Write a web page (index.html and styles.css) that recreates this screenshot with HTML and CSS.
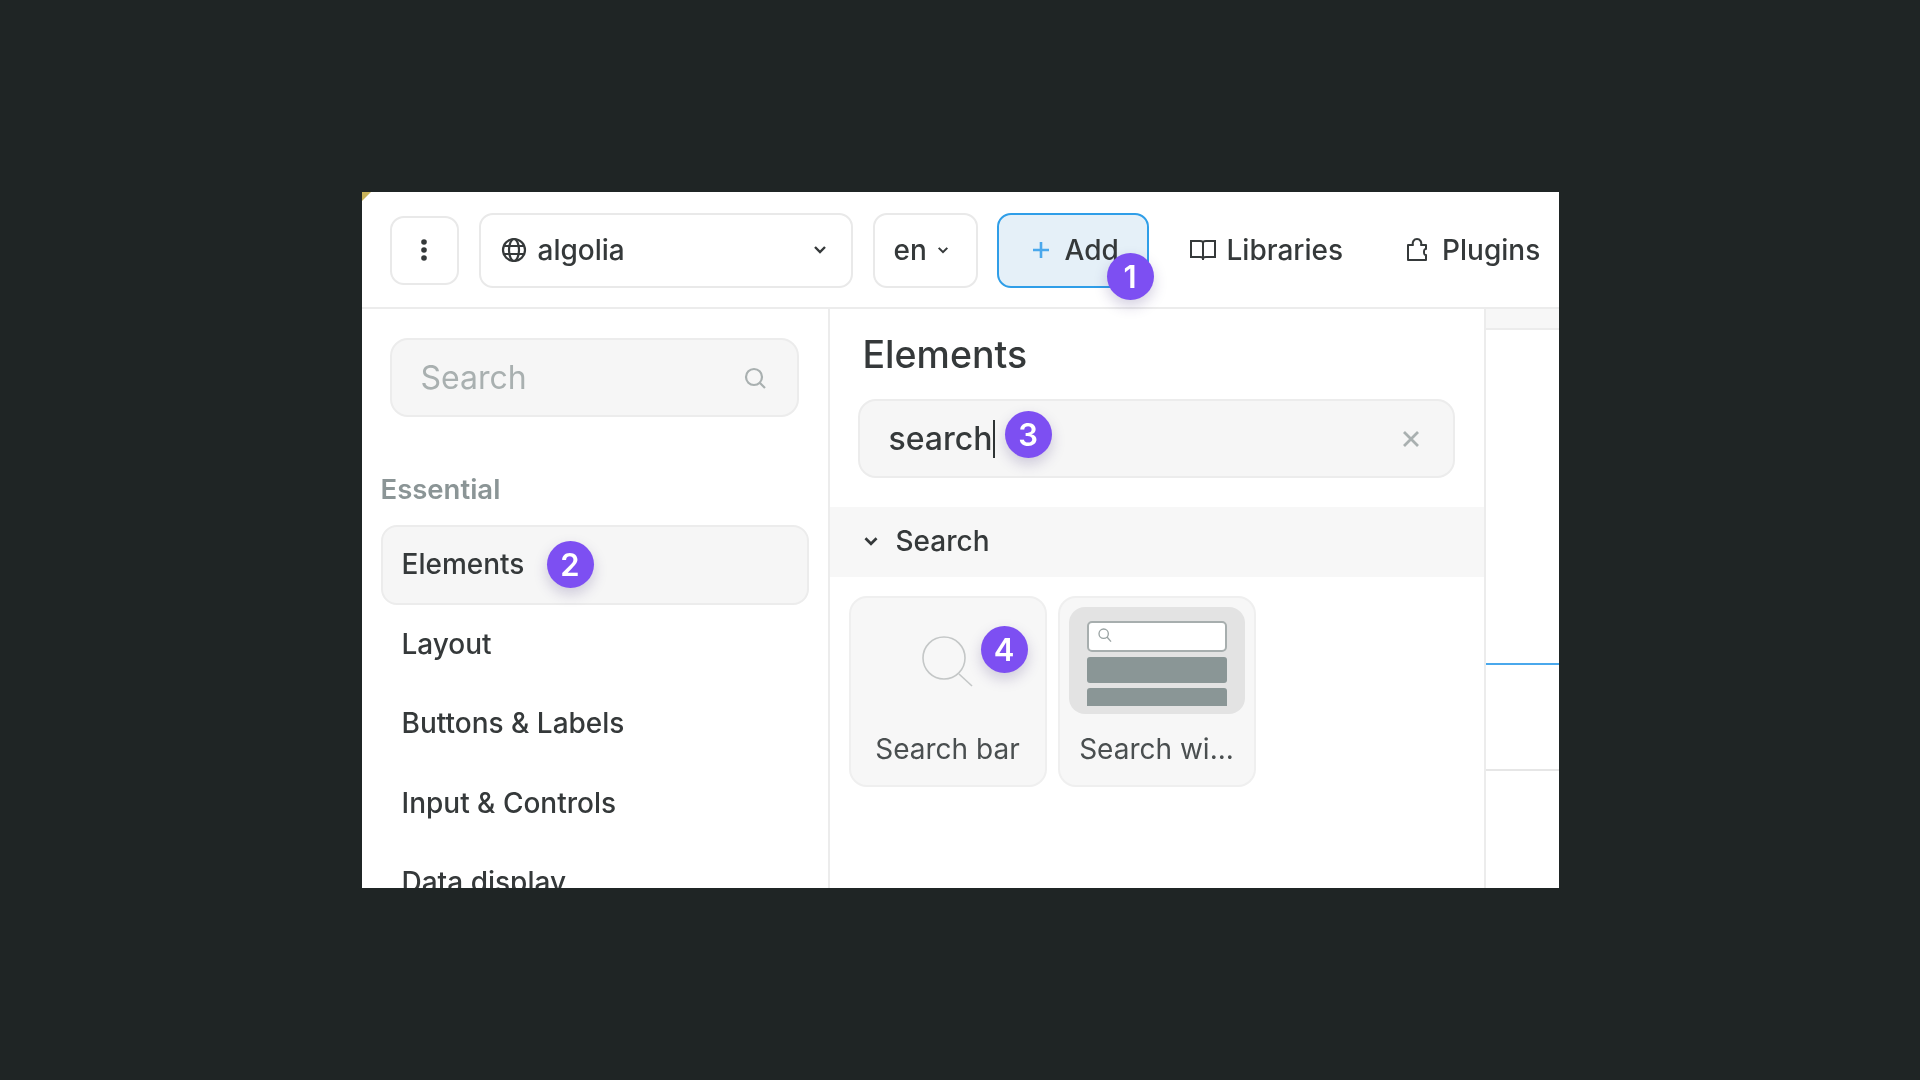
FILE: index.html
```html
<!DOCTYPE html>
<html lang="en">
<head>
<meta charset="UTF-8">
<meta name="viewport" content="width=device-width, initial-scale=1.0">
<title>Add search element</title>
<link rel="stylesheet" href="styles.css">
</head>
<body>
  <div class="window">
    <!-- Top bar -->
    <header class="topbar">
      <button class="btn btn-menu" aria-label="Menu">
        <svg width="8" height="24" viewBox="0 0 8 24"><circle cx="4" cy="4" r="2.8"/><circle cx="4" cy="12" r="2.8"/><circle cx="4" cy="20" r="2.8"/></svg>
      </button>
      <button class="btn btn-site">
        <svg class="globe" width="26" height="26" viewBox="0 0 26 26"><circle cx="13" cy="13" r="11"/><ellipse cx="13" cy="13" rx="5" ry="11"/><path d="M3 9h20M3 17h20"/></svg>
        <span>algolia</span>
        <svg class="chev chev-site" width="14" height="9" viewBox="0 0 14 9"><path d="M2 2l5 5 5-5"/></svg>
      </button>
      <button class="btn btn-lang">
        <span>en</span>
        <svg class="chev" width="12" height="8" viewBox="0 0 14 9"><path d="M2 2l5 5 5-5"/></svg>
      </button>
      <div class="add-wrap">
        <button class="btn btn-add">
          <svg class="plus" width="20" height="20" viewBox="0 0 20 20"><path d="M10 2v16M2 10h16"/></svg>
          <span>Add</span>
        </button>
        <span class="badge badge-add">1</span>
      </div>
      <a class="tab tab-lib">
        <svg width="28" height="24" viewBox="0 0 28 24"><path d="M14 4c-1-1-2-1-3-1H2v16h9c1 0 2 0 3 1 1-1 2-1 3-1h9V3h-9c-1 0-2 0-3 1zM14 4v18"/></svg>
        <span>Libraries</span>
      </a>
      <a class="tab tab-plug">
        <svg width="24" height="26" viewBox="0 0 24 26"><path d="M3 8h5c-1-3 1-6 4-6s5 3 4 6h5v4c-2 0-2 1-2 3s0 3 2 3v5H3z" stroke-linejoin="round"/></svg>
        <span>Plugins</span>
      </a>
    </header>

    <div class="main">
      <!-- Left navigation -->
      <nav class="sidebar">
        <div class="field side-search">
          <span class="placeholder">Search</span>
          <svg class="mag" width="24" height="24" viewBox="0 0 24 24"><circle cx="11" cy="11" r="8"/><path d="M17 17l5 5"/></svg>
        </div>
        <h3 class="nav-title">Essential</h3>
        <ul class="nav-list">
          <li class="nav-item active">Elements<span class="badge badge-nav">2</span></li>
          <li class="nav-item">Layout</li>
          <li class="nav-item">Buttons &amp; Labels</li>
          <li class="nav-item">Input &amp; Controls</li>
          <li class="nav-item">Data display</li>
        </ul>
      </nav>

      <!-- Elements panel -->
      <section class="panel">
        <h2 class="panel-title">Elements</h2>
        <div class="field panel-search">
          <span class="typed">search</span>
          <span class="caret"></span>
          <span class="badge badge-input">3</span>
          <svg class="clear" width="18" height="18" viewBox="0 0 18 18"><path d="M2 2l14 14M16 2L2 16"/></svg>
        </div>
        <div class="group-head">
          <svg class="chev" width="16" height="10" viewBox="0 0 14 9"><path d="M2 2l5 5 5-5"/></svg>
          <span>Search</span>
        </div>
        <div class="cards">
          <div class="card">
            <div class="thumb thumb-plain">
              <svg width="52" height="52" viewBox="0 0 52 52"><circle cx="22" cy="22" r="21"/><path d="M37 38l13 12"/></svg>
            </div>
            <span class="card-label">Search bar</span>
            <span class="badge badge-card">4</span>
          </div>
          <div class="card">
            <div class="thumb thumb-widget">
              <div class="mini-input">
                <svg width="16" height="16" viewBox="0 0 24 24"><circle cx="10" cy="10" r="7"/><path d="M15 15l6 7"/></svg>
              </div>
              <div class="mini-row"></div>
              <div class="mini-row mini-row-cut"></div>
            </div>
            <span class="card-label">Search wi...</span>
          </div>
        </div>
      </section>

      <!-- Canvas peeking out on the right -->
      <div class="canvas">
        <div class="canvas-band"></div>
        <div class="canvas-blue"></div>
        <div class="canvas-line"></div>
      </div>
    </div>
  </div>
</body>
</html>
```
FILE: styles.css
```css
* {
  box-sizing: border-box;
}

body {
  margin: 0;
  height: 100vh;
  background-color: #1f2525;
  display: flex;
  justify-content: center;
  align-items: center;
  font-family: Inter, "Liberation Sans", sans-serif;
  color: #35393a;
  overflow: hidden;
}

.window {
  position: relative;
  width: 1197px;
  height: 696px;
  background-color: #ffffff;
  overflow: hidden;
  filter: blur(0.7px);
  display: flex;
  flex-direction: column;
}

.window::before {
  content: "";
  position: absolute;
  top: 0;
  left: 0;
  border-top: 9px solid #c9b35a;
  border-right: 9px solid transparent;
}

.topbar {
  height: 117px;
  flex-shrink: 0;
  padding: 21px 0 0 28px;
  border-bottom: 2px solid #ececec;
  display: flex;
  align-items: flex-start;
}

.btn {
  height: 75px;
  background-color: #ffffff;
  border: 2px solid #e9e9e9;
  border-radius: 14px;
  font: 530 28px Inter, "Liberation Sans", sans-serif;
  color: #35393a;
  display: flex;
  align-items: center;
  padding: 0 0 2px;
}

.btn-menu {
  width: 69px;
  height: 69px;
  margin-top: 3px;
  margin-right: 20px;
  justify-content: center;
}

.btn-menu circle {
  fill: #35393a;
}

.btn-site {
  width: 374px;
  margin-right: 20px;
  padding: 0 24px 2px 20px;
}

.btn-site span {
  margin-left: 11px;
  flex-grow: 1;
  text-align: left;
}

.globe {
  fill: none;
  stroke: #35393a;
  stroke-width: 2.2;
}

.chev {
  fill: none;
  stroke: #35393a;
  stroke-width: 2.4;
}

.btn-lang {
  width: 105px;
  margin-right: 19px;
  padding-left: 19px;
  gap: 10px;
}

.add-wrap {
  position: relative;
  margin-right: 40px;
}

.btn-add {
  width: 152px;
  background-color: #e5f0f8;
  border-color: #2f9ee8;
  border-width: 2.5px;
  padding-left: 32px;
  gap: 14px;
}

.plus {
  fill: none;
  stroke: #4aa8ec;
  stroke-width: 2.6;
}

.tab {
  display: flex;
  align-items: center;
  height: 75px;
  padding-bottom: 2px;
  font-size: 28px;
  font-weight: 520;
  gap: 10px;
}

.tab svg {
  fill: none;
  stroke: #35393a;
  stroke-width: 2;
}

.tab-plug {
  gap: 13px;
}

.tab-lib {
  margin-right: 62px;
}

.badge {
  position: absolute;
  width: 47px;
  height: 47px;
  border-radius: 50%;
  background-color: #7d4ff2;
  color: #ffffff;
  font-size: 31px;
  font-weight: 600;
  display: flex;
  justify-content: center;
  align-items: center;
  box-shadow: 0 6px 14px rgba(60, 40, 120, 0.22);
}

.badge-add {
  top: 40px;
  right: -5px;
}

.main {
  flex-grow: 1;
  display: flex;
  min-height: 0;
}

.sidebar {
  width: 468px;
  flex-shrink: 0;
  border-right: 2px solid #ececec;
  padding: 29px 0 0 19px;
}

.field {
  position: relative;
  height: 79px;
  background-color: #f6f6f6;
  border: 2px solid #ececec;
  border-radius: 18px;
  display: flex;
  align-items: center;
}

.side-search {
  width: 409px;
  margin-left: 9px;
  padding: 0 30px 0 29px;
  justify-content: space-between;
}

.placeholder {
  font-size: 32px;
  color: #a9b0b0;
}

.mag {
  fill: none;
  stroke: #a9b0b0;
  stroke-width: 2.2;
}

.nav-title {
  margin: 56px 0 0;
  height: 33px;
  line-height: 33px;
  font-size: 27.5px;
  font-weight: 560;
  color: #8b9596;
}

.nav-list {
  list-style: none;
  margin: 19px 0 0;
  padding: 0;
}

.nav-item {
  position: relative;
  width: 428px;
  height: 79.5px;
  padding: 0 0 2px 21px;
  display: flex;
  align-items: center;
  font-size: 28px;
  font-weight: 540;
}

.nav-item.active {
  height: 80px;
  background-color: #f6f6f6;
  border: 2px solid #ececec;
  border-radius: 16px;
  padding-left: 19px;
}

.badge-nav {
  left: 164px;
  top: 14px;
}

.panel {
  width: 656px;
  flex-shrink: 0;
  border-right: 2px solid #ececec;
}

.panel-title {
  margin: 23px 0 0 33px;
  height: 46px;
  line-height: 46px;
  font-size: 37.5px;
  font-weight: 540;
}

.panel-search {
  width: 597px;
  margin: 21px 0 0 28px;
  padding-left: 29px;
}

.typed {
  font-size: 32px;
  font-weight: 520;
}

.caret {
  width: 2px;
  height: 38px;
  margin-left: 0;
  background-color: #2f3435;
}

.badge-input {
  left: 145px;
  top: 10px;
}

.clear {
  position: absolute;
  right: 33px;
  top: 29px;
  fill: none;
  stroke: #a9b0b0;
  stroke-width: 2.8;
}

.group-head {
  height: 70px;
  margin-top: 29px;
  background-color: #f7f7f7;
  padding: 0 0 2px 33px;
  display: flex;
  align-items: center;
  gap: 17px;
  font-size: 28px;
  font-weight: 520;
}

.cards {
  display: flex;
  gap: 11px;
  margin: 19px 0 0 19px;
}

.card {
  position: relative;
  width: 198px;
  height: 191px;
  background-color: #f7f7f7;
  border: 2px solid #efefef;
  border-radius: 18px;
  padding: 9px 9px 0;
  display: flex;
  flex-direction: column;
  align-items: center;
}

.thumb {
  width: 176px;
  height: 107px;
  border-radius: 16px;
}

.thumb-plain {
  display: flex;
  justify-content: center;
  padding-top: 29px;
}

.thumb-plain svg {
  fill: none;
  stroke: #c4c7c7;
  stroke-width: 1.6;
}

.thumb-widget {
  background-color: #e3e3e3;
  padding: 14px 18px 0;
  overflow: hidden;
}

.mini-input {
  height: 31px;
  background-color: #ffffff;
  border: 2px solid #a7aeae;
  border-radius: 5px;
  padding: 4px 0 0 8px;
}

.mini-input svg {
  display: block;
  fill: none;
  stroke: #9aa3a3;
  stroke-width: 2;
}

.mini-row {
  height: 26px;
  margin-top: 5px;
  background-color: #8a9696;
  border-radius: 3px;
}

.mini-row-cut {
  height: 18px;
  border-radius: 3px 3px 0 0;
}

.card-label {
  margin-top: 18px;
  font-size: 28px;
  font-weight: 440;
  color: #4a4f50;
  white-space: nowrap;
}

.badge-card {
  top: 28px;
  right: 17px;
}

.canvas {
  position: relative;
  flex-grow: 1;
}

.canvas-band {
  height: 21px;
  background-color: #f7f7f7;
  border-bottom: 2px solid #ececec;
}

.canvas-blue {
  position: absolute;
  top: 354px;
  left: 0;
  right: 0;
  height: 2px;
  background-color: #4aa8ec;
}

.canvas-line {
  position: absolute;
  top: 460px;
  left: 0;
  right: 0;
  height: 2px;
  background-color: #e6e6e6;
}
```
